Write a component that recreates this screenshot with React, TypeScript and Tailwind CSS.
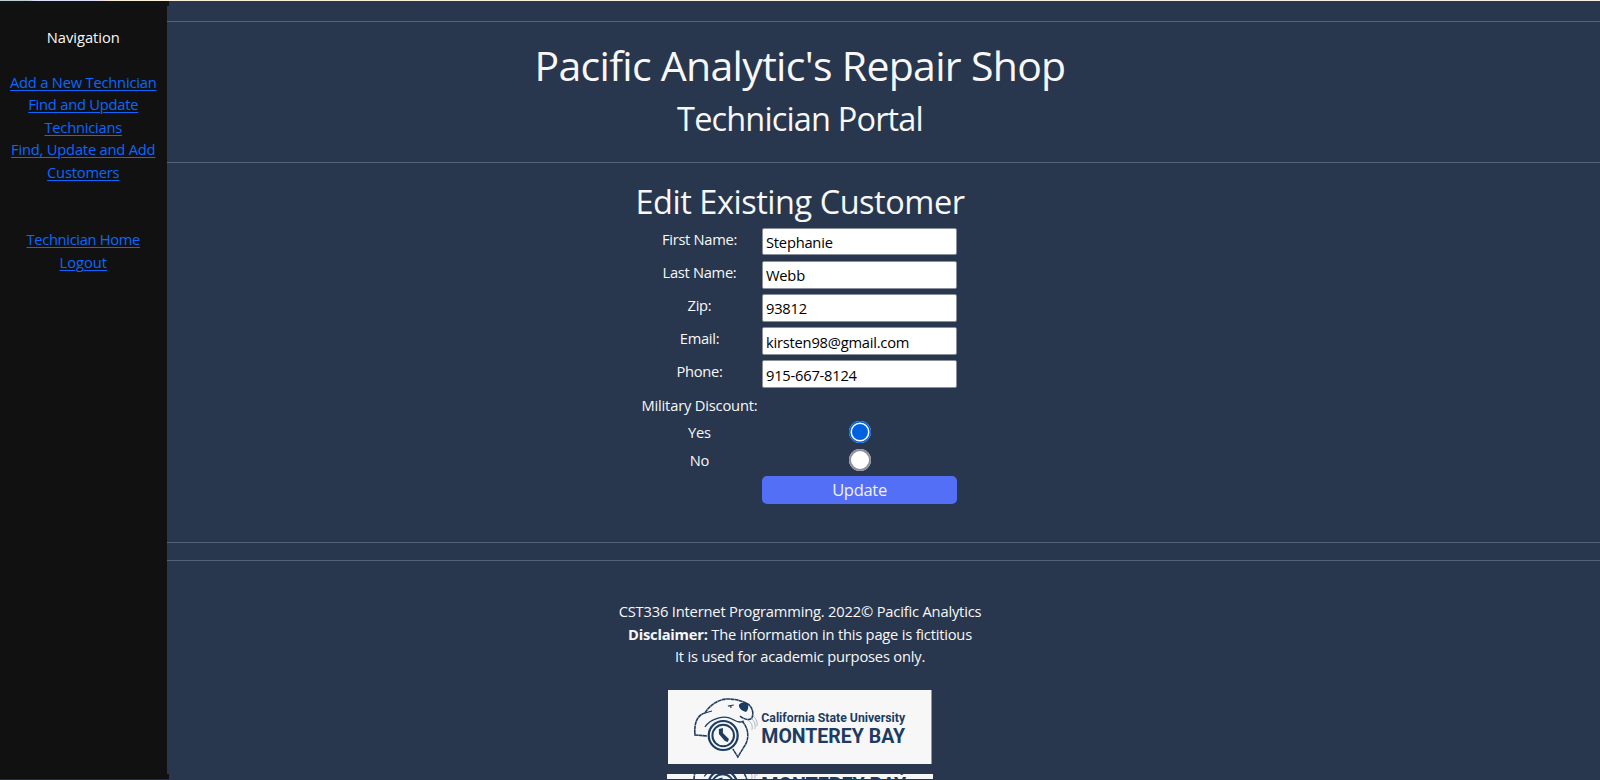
import React from "react";

const Rule = ({ className }: { className?: string }) => (
  <div className={"h-px w-full shrink-0 bg-[#53627a] " + (className ?? "")} />
);

const link =
  "whitespace-nowrap text-[#0d66ff] underline decoration-1 underline-offset-[2px]";

function Field({ label, value }: { label: string; value: string }) {
  return (
    <div className="flex h-[33.2px] items-start">
      <label className="w-[125px] text-center tracking-[-0.3px]">{label}</label>
      <input
        defaultValue={value}
        className="h-[27.8px] w-[195px] rounded-[2px] border border-[#8a8f9c] bg-white px-[3px] pt-px text-[14.7px] tracking-[-0.22px] text-black outline-none"
      />
    </div>
  );
}

function Choice({ label, checked }: { label: string; checked?: boolean }) {
  return (
    <div className="flex h-[27.6px] items-start">
      <label className="w-[125px] text-center tracking-[-0.2px]">{label}</label>
      <div className="flex w-[196px] justify-center">
        <input
          type="radio"
          name="discount"
          defaultChecked={checked}
          className="h-[22px] w-[22px] appearance-none rounded-full bg-white shadow-[inset_0_0_0_2px_#8f8f9d] checked:bg-[#0061e0] checked:shadow-[inset_0_0_0_1.5px_#0061e0,inset_0_0_0_3px_#ffffff]"
        />
      </div>
    </div>
  );
}

function Logo({ viewBox, className }: { viewBox: string; className: string }) {
  return (
    <svg viewBox={viewBox} preserveAspectRatio="none" className={className} fill="none" stroke="#1c3c62">
      <rect x="0" y="0" width="264" height="74" fill="#f7f7f7" stroke="none" />
      <path strokeWidth="1.6" strokeDasharray="4 0.3" d="M39 46 L27 45 C26 34 29 25 37 23 C41 16 50 9 60 9 C68 9 74 11 80 14 C85 17 86 24 84 28 C81 31 76 29 72 26" />
      <path strokeWidth="1.5" strokeDasharray="4 0.3" d="M74 31 C81 38 82 49 76 57 L70 67 L65 59" />
      <path strokeWidth="1.3" d="M37 37 C43 28 57 25 64 29 C69 32 73 33 76 31 M37 23 L44 21" />
      <path strokeWidth="0.6" stroke="#7c8da3" d="M83 28 C87 31 88 35 87 39 M80 30 C84 33 85 36 84 40 M85 26 C89 29 90 33 89 36" />
      <path strokeWidth="1.2" d="M60 16 L66 15 M63 15 L63 18" />
      <circle cx="55.300" cy="45.500" r="14.500" strokeWidth="2.2" fill="#f7f7f7" />
      <circle cx="55.300" cy="45.500" r="10.800" strokeWidth="2" />
      <path fill="#1c3c62" stroke="none" d="M51 39 L55 38 L55 43 L61 49 L60 52 L57 51 L51 44 Z M71 15 C73 12 79 12 80 14 C81 17 80 21 78 22 C75 21 71 19 71 15 Z" />
      <g fill="#1c3c62" stroke="none" className="font-['Roboto','Liberation_Sans',sans-serif] font-bold">
        <text x="93.500" y="32.200" textLength="144" lengthAdjust="spacingAndGlyphs" className="text-[12.2px]">California State University</text>
        <text x="93.500" y="53" textLength="144" lengthAdjust="spacingAndGlyphs" className="text-[20.5px]">MONTEREY BAY</text>
      </g>
    </svg>
  );
}

export default function App() {
  return (
    <div className="flex h-[780px] w-[1600px] flex-col overflow-hidden bg-[#28364e] font-['Open_Sans','Noto_Sans',sans-serif] text-[14.7px] leading-[22.45px] text-[#f8f8f8]">
      <div className="h-px shrink-0 bg-[linear-gradient(90deg,#c3ccd6_0px,#c3ccd6_30px,#e4dcfb_34px,#e4dcfb_95px,#fbe0e4_105px,#fdf0dc_120px,#f8f0e6_1600px)]" />
      <div className="flex min-h-0 flex-1">
        <nav className="relative flex w-[166.5px] shrink-0 flex-col items-center bg-[#111111] pt-[25px] text-center">
          <div className="absolute left-0 top-0 h-[5px] w-[169px] bg-[#0e1412]" />
          <div className="absolute bottom-px left-0 h-[5px] w-[169px] bg-[#111111]" />
          <div className="absolute bottom-0 left-0 h-px w-[169px] bg-[#262c44]" />
          <div>Navigation</div>
          <a className={"mt-[22.45px] tracking-[-0.2px] " + link}>Add a New Technician</a>
          <a className={"tracking-[-0.22px] " + link}>
            Find and Update
            <br />
            Technicians
          </a>
          <a className={"tracking-[-0.2px] " + link}>
            Find, Update and Add
            <br />
            Customers
          </a>
          <a className={"mt-[44.9px] tracking-[-0.33px] " + link}>Technician Home</a>
          <a className={link}>Logout</a>
        </nav>
        <main className="flex min-w-0 flex-1 flex-col overflow-hidden pt-5">
          <Rule />
          <header className="flex shrink-0 flex-col items-center pr-[166.5px] pt-[18px]">
            <h1 className="text-[41px] leading-[50px] tracking-[-0.69px]">Pacific Analytic's Repair Shop</h1>
            <h2 className="mt-[9px] text-[32.5px] leading-[40px] tracking-[-0.85px]">Technician Portal</h2>
          </header>
          <Rule className="mt-[23px]" />
          <section className="flex shrink-0 flex-col items-center pr-[166.5px] pt-[19px]">
            <h2 className="text-[32.5px] leading-[40px] tracking-[-0.47px]">Edit Existing Customer</h2>
            <form className="mt-[5.6px] w-[326px]">
              <Field label="First Name:" value="Stephanie" />
              <Field label="Last Name:" value="Webb" />
              <Field label="Zip:" value="93812" />
              <Field label="Email:" value="kirsten98@gmail.com" />
              <Field label="Phone:" value="915-667-8124" />
              <div className="h-[27.6px] w-[125px] whitespace-nowrap text-center tracking-[-0.18px]">Military Discount:</div>
              <Choice label="Yes" checked />
              <Choice label="No" />
              <button
                type="button"
                className="ml-[125px] block h-[27.4px] w-[195px] rounded-[5px] bg-[#536ff6] text-[16.5px] leading-[28px] tracking-[-0.3px] text-[#f0f2ff]"
              >
                Update
              </button>
            </form>
          </section>
          <Rule className="mt-[38.4px]" />
          <Rule className="mt-[17px]" />
          <footer className="flex shrink-0 flex-col items-center pr-[166.5px] pt-[39.4px] text-center">
            <p className="tracking-[-0.18px]">CST336 Internet Programming. 2022© Pacific Analytics</p>
            <p className="tracking-[-0.21px]">
              <b>Disclaimer:</b> The information in this page is fictitious
            </p>
            <p className="tracking-[-0.2px]">It is used for academic purposes only.</p>
            <Logo viewBox="0 0 264 74" className="mt-[22px] h-[74px] w-[263.5px] shrink-0" />
            <Logo viewBox="0 34.5 264 5" className="mt-[10px] h-[5px] w-[266px] shrink-0" />
          </footer>
        </main>
      </div>
    </div>
  );
}
